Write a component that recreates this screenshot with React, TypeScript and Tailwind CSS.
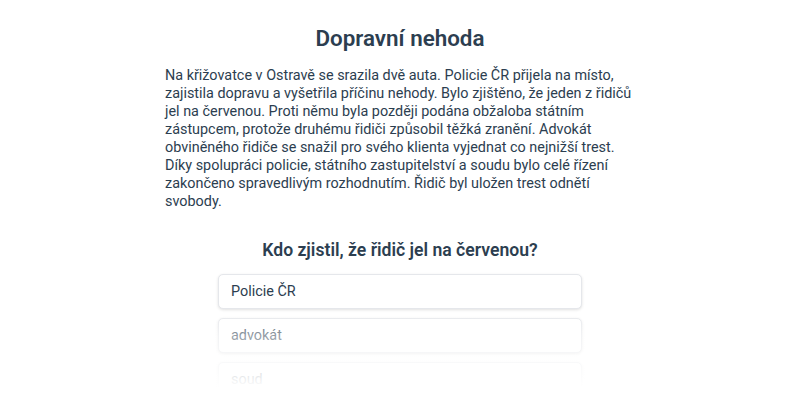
const options = ['Policie ČR', 'advokát', 'soud'];

export default function App() {
  return (
    <div className="h-[400px] overflow-hidden bg-white font-['Roboto',sans-serif] text-[#2c3e50]">
      <div className="mx-auto w-[470px] pt-[23px]">
        <h1 className="text-center text-[22.4px] font-semibold leading-[30px]">Dopravní nehoda</h1>
        <p className="mt-[14px] text-[14.4px] leading-[18px]">
          Na křižovatce v Ostravě se srazila dvě auta. Policie ČR přijela na místo, zajistila dopravu a
          vyšetřila příčinu nehody. Bylo zjištěno, že jeden z řidičů jel na červenou. Proti němu byla
          později podána obžaloba státním zástupcem, protože druhému řidiči způsobil těžká zranění.
          Advokát obviněného řidiče se snažil pro svého klienta vyjednat co nejnižší trest. Díky
          spolupráci policie, státního zastupitelství a soudu bylo celé řízení zakončeno spravedlivým
          rozhodnutím. Řidič byl uložen trest odnětí svobody.
        </p>
        <h2 className="mt-[27px] text-center text-[17.6px] font-semibold leading-[24px]">
          Kdo zjistil, že řidič jel na červenou?
        </h2>
      </div>
      <div className="relative mx-auto mt-[12px] w-[364px]">
        <div className="flex flex-col gap-[9px]">
          {options.map((o) => (
            <div
              key={o}
              className="flex h-[35px] items-center rounded-[5px] border border-[#e5e7eb] bg-white px-[12px] text-[14.4px] shadow-[0_1px_3px_rgba(0,0,0,0.12)]"
            >
              {o}
            </div>
          ))}
        </div>
        <div className="pointer-events-none absolute inset-x-[-10px] top-[36px] h-[100px] bg-gradient-to-b from-white/0 via-white/50 via-[26%] to-white to-[78%]" />
      </div>
    </div>
  );
}
